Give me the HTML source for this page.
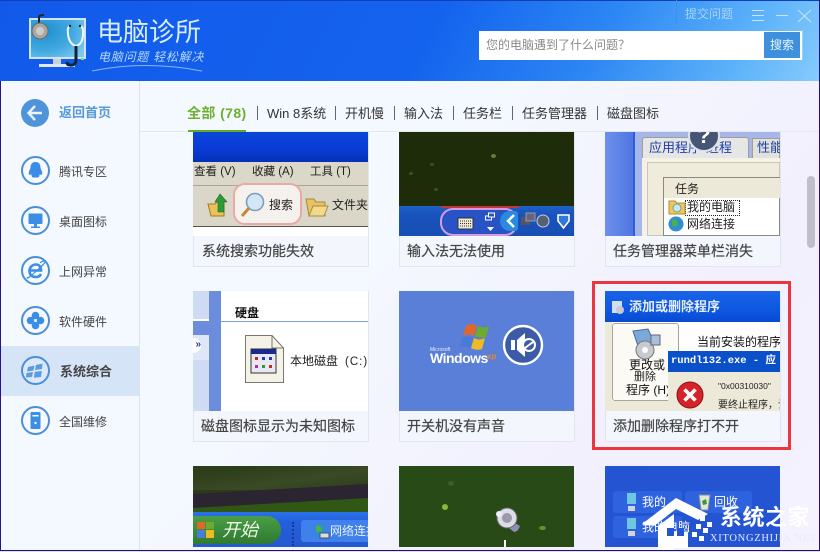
<!DOCTYPE html>
<html lang="zh">
<head>
<meta charset="utf-8">
<title>电脑诊所</title>
<style>
*{box-sizing:border-box;margin:0;padding:0}
html,body{width:820px;height:552px;overflow:hidden;background:#f4f3fd}
body{position:relative;font-family:"Liberation Sans","Noto Sans CJK SC",sans-serif;color:#444}
.a{position:absolute;white-space:nowrap}
.t{position:absolute;white-space:nowrap;line-height:1}
#head{position:absolute;left:0;top:0;width:820px;height:81px;background:linear-gradient(118deg,#1259ea 0,#1463ee 52%,#2c86f3 72%,#5fb4fa 90%,#86cbfc 100%)}
.nav{position:absolute;top:106px;font-size:13px;line-height:15px;color:#333;white-space:nowrap}
.sep{position:absolute;top:106px;width:1px;height:14px;background:#666}
.side{position:absolute;left:59px;font-size:12px;line-height:14px;color:#444;white-space:nowrap}
.ring{position:absolute;left:21px;width:29px;height:29px;border:2px solid #4a8fdb;border-radius:50%;background:#f7f9fe}
.card{position:absolute;width:176px;background:#f3f7fd;border:1px solid #dfe6f1;border-top:0;overflow:hidden}
.cap{position:absolute;font-size:14px;line-height:18px;color:#444;white-space:nowrap;-webkit-text-stroke:.2px #444}
.th{position:absolute;overflow:hidden}
</style>
</head>
<body>
<div class="a" style="left:0;top:0;width:820px;height:552px;background:linear-gradient(130deg,#f5f9ff 0,#f4f8ff 45%,#f2f0fd 75%,#f5f2fe 100%)"></div>

<div id="head"></div>
<div class="a" style="left:0;top:0;width:820px;height:1px;background:#1240b4"></div>

<svg class="a" style="left:26px;top:14px" width="66" height="56" viewBox="0 0 66 56">
  <defs><radialGradient id="sc" cx=".25" cy=".3" r=".9"><stop offset="0" stop-color="#1d8fd0"/><stop offset=".6" stop-color="#42a9e0"/><stop offset="1" stop-color="#7cc8ee"/></radialGradient></defs>
  <rect x="3" y="4" width="57" height="41" fill="#cfe5f3"/>
  <rect x="5" y="6" width="53" height="37" fill="url(#sc)"/>
  <rect x="27" y="45" width="8" height="5" fill="#c9d2d8"/>
  <rect x="13" y="50" width="36" height="3" fill="#dfe8ee"/>
  <path d="M13 9V3Q13 1 18 1" fill="none" stroke="#222" stroke-width="2"/>
  <circle cx="14" cy="17" r="8" fill="#a9a7a2" stroke="#6a6a68"/>
  <circle cx="14" cy="17" r="4" fill="#d0cdc6"/>
  <path d="M44 12Q41 13 42 20Q43 30 50 32Q57 30 57 20Q58 13 54 12" fill="none" stroke="#f2f7fb" stroke-width="2"/>
  <path d="M50 32V45Q50 52 44 51Q41 51 41 48" fill="none" stroke="#10233c" stroke-width="3"/>
  <circle cx="44" cy="12" r="1.2" fill="#10233c"/><circle cx="54" cy="12" r="1.2" fill="#10233c"/>
  <rect x="55" y="44" width="3" height="2" fill="#7fd66a"/>
</svg>
<div class="t" style="left:97px;top:19px;font-size:26px;color:#d6eefe">电脑诊所</div>
<div class="t" style="left:98px;top:51px;font-size:12px;letter-spacing:.75px;color:#b5d9f8;font-style:italic">电脑问题 轻松解决</div>
<svg class="a" style="left:90px;top:62px" width="115" height="12"><path d="M2 9Q55 -2 112 9" fill="none" stroke="#8ab8f4" stroke-width="1"/></svg>

<div class="t" style="left:685px;top:8px;font-size:12px;color:#a8d5f8">提交问题</div>
<div class="a" style="left:676px;top:0;width:1px;height:24px;background:#3f8fee"></div>
<svg class="a" style="left:750px;top:8px" width="66" height="16" fill="none" stroke="#c6e4fb" stroke-width="1">
  <path d="M2 2.5H14M2 7.5H14M2 12.5H14"/>
  <path d="M26 7.5H38"/>
  <path d="M48 2L61 14M61 2L48 14"/>
</svg>
<div class="a" style="left:479px;top:31px;width:323px;height:29px;background:#fff"></div>
<div class="a" style="left:802px;top:30px;width:1px;height:30px;background:#9fcdf4"></div>
<div class="t" style="left:486px;top:39px;font-size:12px;color:#8a8a8a">您的电脑遇到了什么问题？</div>
<div class="a" style="left:764px;top:32px;width:36px;height:26px;background:#3f90dc;color:#e6f3fd;font-size:12px;line-height:26px;text-align:center">搜索</div>

<!-- sidebar -->
<div class="a" style="left:139px;top:81px;width:1px;height:469px;background:#dde3ee"></div>
<div class="a" style="left:1px;top:346px;width:138px;height:50px;background:#d6e4f8"></div>
<div class="a" style="left:21px;top:99px;width:28px;height:28px;border-radius:50%;background:#4f93da"></div>
<svg class="a" style="left:21px;top:99px" width="28" height="28" fill="none" stroke="#eaf3fc" stroke-width="2.4"><path d="M21 14H8M14 7L7.5 14L14 21"/></svg>
<div class="side" style="top:106px;font-size:13px;font-weight:bold;color:#5a9ad8">返回首页</div>

<div class="ring" style="top:156px"></div>
<svg class="a" style="left:21px;top:156px" width="29" height="29"><path d="M14.5 6C10.5 6 9.5 9 9.5 12C8 15 7 18 8.5 19C9.5 19 10 18 10 18C11 20 10.5 21 12 21.5H17C18.5 21 18 20 19 18C19 18 19.5 19 20.5 19C22 18 21 15 19.5 12C19.5 9 18.5 6 14.5 6Z" fill="#3a8ee6"/></svg>
<div class="side" style="top:165px">腾讯专区</div>

<div class="ring" style="top:206px"></div>
<svg class="a" style="left:21px;top:206px" width="29" height="29" fill="#3a8ee6"><rect x="7.5" y="7.5" width="14" height="10.5" rx="1"/><rect x="13" y="18" width="3" height="3"/><rect x="10" y="20.5" width="9" height="1.5"/></svg>
<div class="side" style="top:215px">桌面图标</div>

<div class="ring" style="top:256px"></div>
<svg class="a" style="left:21px;top:256px" width="29" height="29" fill="none" stroke="#3a8ee6"><path d="M9 14.5H20C20 10.5 18 8.5 15 8.5C11 8.5 8.5 11.5 8.5 15C8.5 19 11 21 15 21C17.5 21 19 20 20 18" stroke-width="2.6"/><path d="M7 21C4 24 9 21 12 18C16 14 23 9 24 6C25 4 21 5 19 7" stroke-width="1.2"/></svg>
<div class="side" style="top:265px">上网异常</div>

<div class="ring" style="top:306px"></div>
<svg class="a" style="left:21px;top:306px" width="29" height="29" fill="#3a8ee6"><circle cx="14.5" cy="9.5" r="3.8"/><circle cx="14.5" cy="19.5" r="3.8"/><circle cx="9.5" cy="14.5" r="3.8"/><circle cx="19.5" cy="14.5" r="3.8"/><circle cx="14.5" cy="14.5" r="1" fill="#fff"/></svg>
<div class="side" style="top:315px">软件硬件</div>

<div class="ring" style="top:356px;background:#dde9f9"></div>
<svg class="a" style="left:21px;top:356px" width="29" height="29" fill="#5a9be2"><path d="M7 11L13.5 9.5L12.5 14.5L6 15.5Z"/><path d="M15 9L21.5 7.5L21 13L14 14Z"/><path d="M5.5 17L12 16L11 21L5 21.5Z"/><path d="M13.7 15.8L20.8 15L20 21L13 21.8Z"/></svg>
<div class="side" style="left:60px;top:364px;font-size:13px;font-weight:bold;line-height:15px;color:#444">系统综合</div>

<div class="ring" style="top:406px"></div>
<svg class="a" style="left:21px;top:406px" width="29" height="29"><rect x="9.5" y="6" width="10" height="17" rx="1" fill="#3a8ee6"/><rect x="11.5" y="9" width="6" height="1.5" fill="#fff"/><circle cx="14.5" cy="17" r="1.2" fill="#fff"/></svg>
<div class="side" style="top:415px">全国维修</div>

<!-- tabs -->
<div class="a" style="left:140px;top:131px;width:680px;height:1px;background:#e3e8f0"></div>
<div class="nav" style="left:187px;font-weight:bold;color:#6db02f;font-size:14px;letter-spacing:.4px">全部 (78)</div>
<div class="a" style="left:188px;top:130px;width:58px;height:2px;background:#62ad24"></div>
<div class="sep" style="left:257px"></div>
<div class="nav" style="left:267px">Win 8系统</div>
<div class="sep" style="left:335px"></div>
<div class="nav" style="left:345px">开机慢</div>
<div class="sep" style="left:394px"></div>
<div class="nav" style="left:404px">输入法</div>
<div class="sep" style="left:512px"></div>
<div class="sep" style="left:453px"></div>
<div class="nav" style="left:463px">任务栏</div>
<div class="nav" style="left:522px">任务管理器</div>
<div class="sep" style="left:597px"></div>
<div class="nav" style="left:607px">磁盘图标</div>

<!-- Card 1 -->
<div class="card" style="left:193px;top:132px;height:135px"></div>
<div class="th" style="left:193px;top:132px;width:175px;height:104px;background:#fff">
  <div class="a" style="left:0;top:0;width:175px;height:30px;background:linear-gradient(#0a46d8,#0a3cd8 50%,#0530b8)"></div>
  <div class="a" style="left:0;top:30px;width:175px;height:23px;background:#dbd8c9"></div>
  <div class="a" style="left:0;top:53px;width:175px;height:1px;background:#a8a698"></div>
  <div class="a" style="left:0;top:54px;width:175px;height:40px;background:#dad7c9"></div>
  <div class="a" style="left:0;top:94px;width:175px;height:1px;background:#55544c"></div>
  <div class="t" style="left:1px;top:35px;font-size:11.5px;color:#222">查看 (V)</div>
  <div class="t" style="left:59px;top:35px;font-size:11.5px;color:#222">收藏 (A)</div>
  <div class="t" style="left:117px;top:35px;font-size:11.5px;color:#222">工具 (T)</div>
  <svg class="a" style="left:14px;top:61px" width="24" height="24"><path d="M1 11H8L10 9H17V23H4Z" fill="#e9c25a" stroke="#a27a20"/><path d="M13 1L20 9H17V19H11V9H8Z" fill="#2d9a35" stroke="#1a6a20" stroke-width=".6"/></svg>
  <div class="a" style="left:40px;top:51px;width:69px;height:42px;border:2px solid #eaa9a9;border-radius:12px;background:#f5f1ec"></div>
  <svg class="a" style="left:47px;top:60px" width="26" height="28"><circle cx="15" cy="10" r="8.5" fill="#d2e6f6" stroke="#7d9ec0" stroke-width="1.6"/><path d="M9 16L2 24" stroke="#c88838" stroke-width="3"/></svg>
  <div class="t" style="left:76px;top:67px;font-size:12px;color:#222">搜索</div>
  <svg class="a" style="left:112px;top:63px" width="24" height="24"><path d="M1 4H9L11 7H20V21H4Z" fill="#e7c264" stroke="#a98a3a"/><path d="M4 21L8 11H23L19 21Z" fill="#f2d98c" stroke="#a98a3a"/></svg>
  <div class="t" style="left:139px;top:67px;font-size:12px;color:#222">文件夹</div>
</div>
<div class="cap" style="left:202px;top:242px">系统搜索功能失效</div>

<!-- Card 2 -->
<div class="card" style="left:399px;top:132px;height:135px"></div>
<div class="th" style="left:399px;top:132px;width:175px;height:104px;background:#1e2c0a">
  <div class="a" style="left:92px;top:22px;width:5px;height:4px;border-radius:50%;background:#6f7a32"></div>
  <div class="a" style="left:31px;top:31px;width:4px;height:3px;border-radius:50%;background:#3d5220"></div>
  <div class="a" style="left:10px;top:40px;width:4px;height:3px;border-radius:50%;background:#3d5220"></div>
  <div class="a" style="left:35px;top:56px;width:4px;height:3px;border-radius:50%;background:#3d5220"></div>
  <div class="a" style="left:0;top:74px;width:175px;height:30px;background:linear-gradient(#1f5fc8,#1a52bd 30%,#174fb4)"></div>
  <div class="a" style="left:42px;top:74px;width:78px;height:2px;background:#c03a3a"></div>
  <div class="a" style="left:41px;top:76px;width:78px;height:28px;border:2px solid #d79ae0;border-radius:13px;background:#2753c4"></div>
  <svg class="a" style="left:58px;top:81px" width="18" height="18"><rect x="1" y="5" width="15" height="11" fill="#ece9d8" stroke="#333"/><path d="M3 8H14M3 10.5H14M3 13H14" stroke="#333" stroke-dasharray="1 1"/></svg>
  <svg class="a" style="left:85px;top:79px" width="14" height="22" fill="none" stroke="#fff"><rect x="1.5" y="5" width="6" height="4"/><rect x="4.5" y="2" width="6" height="4" fill="#2753c4"/><path d="M3 16H10L6.5 20Z" fill="#fff" stroke="none"/></svg>
  <div class="a" style="left:101px;top:79px;width:18px;height:20px;background:#2a89e0;border-radius:10px 3px 3px 10px"></div>
  <svg class="a" style="left:106px;top:81px" width="14" height="16" fill="none" stroke="#fff" stroke-width="2.5"><path d="M9 2L3 8L9 14"/></svg>
  <svg class="a" style="left:121px;top:80px" width="50" height="20"><rect x="1" y="5" width="9" height="8" fill="#556" /><rect x="6" y="1" width="9" height="8" fill="#667" stroke="#99a"/><circle cx="23" cy="9" r="6" fill="#556070" stroke="#ccd"/><path d="M38 3H49V9L43.5 16L38 9Z" fill="#2f78d8" stroke="#fff" stroke-width="1.6"/></svg>
</div>
<div class="cap" style="left:407px;top:242px">输入法无法使用</div>

<!-- Card 3 -->
<div class="card" style="left:605px;top:132px;height:135px"></div>
<div class="th" style="left:605px;top:132px;width:175px;height:104px;background:#8ba0e6">
  <div class="a" style="left:0;top:0;width:28px;height:104px;background:linear-gradient(90deg,#6f90ea,#4f76e2)"></div>
  <div class="a" style="left:28px;top:0;width:2px;height:104px;background:#2a5fe0"></div>
  <div class="a" style="left:30px;top:0;width:145px;height:104px;background:#a6b5ea"></div>
  <div class="a" style="left:37px;top:5px;width:107px;height:25px;background:#e6e6e4;border:1px solid #9f9f94;border-bottom:0;border-radius:3px 3px 0 0"></div>
  <div class="a" style="left:147px;top:6px;width:28px;height:24px;background:#e2e1dc;border:1px solid #9f9f94;border-bottom:0"></div>
  <div class="t" style="left:44px;top:9px;font-size:13px;color:#1c3fa8">应用程序</div>
  <div class="t" style="left:101px;top:9px;font-size:13px;color:#1c3fa8">进程</div>
  <div class="t" style="left:152px;top:9px;font-size:13px;color:#1c3fa8">性能</div>
  <div class="a" style="left:37px;top:26px;width:138px;height:78px;background:#f4f2e6"></div>
  <div class="a" style="left:42px;top:30px;width:133px;height:74px;background:#efecdc;border:1px solid #c9c6b6"></div>
  <div class="a" style="left:58px;top:45px;width:117px;height:59px;background:#fff;border:1px solid #8a8a80"></div>
  <div class="a" style="left:59px;top:46px;width:116px;height:20px;background:#ecE9d8"></div>
  <div class="t" style="left:70px;top:51px;font-size:12px;color:#222">任务</div>
  <div class="a" style="left:80px;top:68px;width:55px;height:16px;border:1px dotted #222"></div>
  <svg class="a" style="left:63px;top:67px" width="18" height="36"><path d="M1 2H7L9 4H17V15H1Z" fill="#efc660" stroke="#b58a2c"/><circle cx="9" cy="9" r="4" fill="#cfe4f5" stroke="#6a8"/><circle cx="8" cy="25" r="7.5" fill="#2f8ed0"/><path d="M4 21Q9 19 10 25Q7 30 4 26Z" fill="#4fb04a"/></svg>
  <div class="t" style="left:82px;top:69px;font-size:12px;color:#222">我的电脑</div>
  <div class="t" style="left:82px;top:86px;font-size:12px;color:#222">网络连接</div>
  <div class="a" style="left:83px;top:-12px;width:32px;height:32px;border-radius:50%;background:#465573;border:2px solid #dde2ee;color:#fff;font:bold 22px/28px 'Liberation Sans',sans-serif;text-align:center">?</div>
</div>
<div class="cap" style="left:613px;top:242px">任务管理器菜单栏消失</div>

<!-- Card 4 -->
<div class="card" style="left:193px;top:291px;height:151px"></div>
<div class="th" style="left:193px;top:291px;width:175px;height:120px;background:#fff">
  <div class="a" style="left:0;top:0;width:16px;height:120px;background:#cfdaf5"></div>
  <div class="a" style="left:0;top:28px;width:16px;height:2px;background:#fff"></div>
  <div class="a" style="left:0;top:30px;width:16px;height:14px;background:#6c8cdc"></div>
  <div class="a" style="left:0;top:44px;width:16px;height:25px;background:#dfe6f8"></div>
  <div class="a" style="left:-7px;top:47px;width:15px;height:15px;border-radius:50%;background:#fff;color:#1c3f9c;font:bold 10px/13px 'Liberation Sans',sans-serif;text-align:right">»</div>
  <div class="a" style="left:16px;top:0;width:12px;height:120px;background:#6c8cdc"></div>
  <div class="t" style="left:42px;top:16px;font-size:12px;font-weight:bold;color:#111">硬盘</div>
  <div class="a" style="left:28px;top:30px;width:147px;height:1px;background:#7fa6dc"></div>
  <svg class="a" style="left:51px;top:43px" width="42" height="50"><path d="M1.5 1.5H28L39.5 14V48.5H1.5Z" fill="#f5f3e8" stroke="#77776c"/><path d="M28 1.5V14H39.5" fill="none" stroke="#77776c"/><rect x="7" y="15" width="25" height="24" fill="#e8e8f2" stroke="#333"/><rect x="7" y="15" width="25" height="5" fill="#1c2a8c"/><g fill="#c02a2a"><rect x="11" y="23" width="3" height="3"/><rect x="25" y="23" width="3" height="3" fill="#2a3ac0"/><rect x="18" y="23" width="3" height="3" fill="#2a3ac0"/><rect x="11" y="31" width="3" height="3" fill="#b02ab0"/><rect x="18" y="31" width="3" height="3" fill="#2a9a2a"/><rect x="25" y="31" width="3" height="3"/></g></svg>
  <div class="t" style="left:97px;top:64px;font-size:12px;color:#222">本地磁盘<span style="margin-left:7px;letter-spacing:1px;font-size:11.5px">(C:)</span></div>
</div>
<div class="cap" style="left:201px;top:417px">磁盘图标显示为未知图标</div>

<!-- Card 5 -->
<div class="card" style="left:399px;top:291px;height:151px"></div>
<div class="th" style="left:399px;top:291px;width:175px;height:120px;background:#5a7fd9">
  <svg class="a" style="left:58px;top:30px" width="34" height="30"><path d="M9 5Q14 1 20 5L17 15Q12 12 6 15Z" fill="#e0662a"/><path d="M21 5Q26 8 32 5L29 16Q24 18 18 15Z" fill="#6eaa2e"/><path d="M5 17Q10 14 16 17L13 27Q8 24 2 27Z" fill="#4a7ad8"/><path d="M17 17Q22 20 28 17L25 28Q20 30 14 27Z" fill="#eebb22"/></svg>
  <div class="t" style="left:31px;top:57px;font-size:5px;color:#e8eefa">Microsoft</div>
  <div class="t" style="left:31px;top:60px;font-size:14px;font-weight:bold;letter-spacing:-.5px;color:#fff">Windows</div>
  <div class="t" style="left:88px;top:62px;font-size:8px;font-weight:bold;color:#e8853a">xp</div>
  <svg class="a" style="left:103px;top:33px" width="42" height="42"><circle cx="21" cy="21" r="19" fill="#3b5aa8" stroke="#fff" stroke-width="2.4"/><path d="M9 16H13V26H9Z" fill="#fff"/><path d="M15 16L23 9V33L15 26Z" fill="#fff"/><circle cx="27" cy="21" r="6" fill="#3b5aa8" stroke="#fff" stroke-width="2"/><path d="M23 24L31 18" stroke="#fff" stroke-width="2"/></svg>
</div>
<div class="cap" style="left:407px;top:417px">开关机没有声音</div>

<!-- Card 6 -->
<div class="card" style="left:605px;top:291px;height:151px"></div>
<div class="th" style="left:605px;top:291px;width:175px;height:120px;background:#fff">
  <div class="a" style="left:0;top:0;width:175px;height:31px;background:linear-gradient(#1a64e8,#0b55e0 70%,#0a4ad0)"></div>
  <div class="t" style="left:24px;top:9px;font-size:13px;font-weight:bold;color:#e4edfa">添加或删除程序</div>
  <svg class="a" style="left:5px;top:8px" width="16" height="16"><rect x="2" y="2" width="10" height="12" fill="#cfe0f4"/><circle cx="10" cy="11" r="4" fill="#c8c8d0"/></svg>
  <div class="a" style="left:0;top:31px;width:7px;height:89px;background:#ece9d8"></div>
  <div class="a" style="left:7px;top:32px;width:67px;height:78px;background:#fbfaf4;border:1px solid #a8a69a;border-radius:3px"></div>
  <div class="a" style="left:0;top:110px;width:63px;height:10px;background:#ece9d8"></div>
  <svg class="a" style="left:23px;top:37px" width="36" height="32"><path d="M5 3L20 1L26 14L10 18Z" fill="#7aa8d8" stroke="#4a6a94"/><circle cx="17" cy="22" r="9" fill="#c8cad2" stroke="#777"/><circle cx="17" cy="22" r="3" fill="#fff"/><rect x="23" y="7" width="9" height="10" fill="#a8c0dc" stroke="#667"/></svg>
  <div class="t" style="left:24px;top:67px;font-size:12px;color:#111;line-height:14px;text-align:center;width:36px;white-space:normal">更改或</div>
  <div class="t" style="left:29px;top:81px;font-size:11px;color:#222">删除</div>
  <div class="t" style="left:21px;top:93px;font-size:12px;color:#111">程序 (H)</div>
  <div class="t" style="left:92px;top:45px;font-size:12px;color:#111">当前安装的程序</div>
  <div class="a" style="left:63px;top:60px;width:112px;height:60px;background:#ece9d8"></div>
  <div class="a" style="left:63px;top:60px;width:112px;height:21px;background:#0a50c8;overflow:hidden"><span class="t" style="left:3px;top:5px;font:bold 10.5px/1 'Liberation Mono','Noto Sans CJK SC',monospace;color:#fff">rundl132.exe - 应</span></div>
  <svg class="a" style="left:71px;top:90px" width="28" height="28"><circle cx="14" cy="14" r="13" fill="#d8222a" stroke="#8a1018"/><path d="M8.5 8.5L19.5 19.5M19.5 8.5L8.5 19.5" stroke="#fff" stroke-width="3.6"/></svg>
  <div class="t" style="left:113px;top:91px;font-size:8.5px;color:#222">"0x00310030"</div>
  <div class="t" style="left:113px;top:110px;font-size:10px;color:#222">要终止程序，让</div>
</div>
<div class="cap" style="left:613px;top:417px">添加删除程序打不开</div>
<div class="a" style="left:592px;top:281px;width:199px;height:169px;border:3px solid #e8373f"></div>

<!-- Card 7 -->
<div class="th" style="left:193px;top:466px;width:175px;height:81px;background:#2c3a1a">
  <div class="a" style="left:0;top:0;width:175px;height:24px;background:linear-gradient(172deg,#2d3f1a 20%,#3a4a24 60%,#2c3a1c)"></div>
  <svg class="a" style="left:0;top:14px" width="175" height="34"><path d="M0 14L175 4V18L0 28Z" fill="#2a2530"/><path d="M0 28L175 18V34H0Z" fill="#305714"/></svg>
  <div class="a" style="left:0;top:46px;width:175px;height:35px;background:linear-gradient(#2a72e8,#245fdc 30%,#2458cf)"></div>
  <div class="a" style="left:-10px;top:50px;width:98px;height:28px;border-radius:0 14px 14px 0;background:linear-gradient(#4b9e46,#38893a 60%,#2f7a30)"></div>
  <svg class="a" style="left:2px;top:54px" width="22" height="20"><path d="M2 2H10V9H2Z" fill="#e0662a"/><path d="M11 2H19V9H11Z" fill="#6eaa2e"/><path d="M2 10H10V18H2Z" fill="#4a7ad8"/><path d="M11 10H19V18H11Z" fill="#eebb22"/></svg>
  <div class="t" style="left:29px;top:55px;font-size:18px;font-style:italic;color:#f2f6e8">开始</div>
  <div class="a" style="left:99px;top:56px;width:2px;height:24px;border-left:2px dotted #123a9c"></div>
  <div class="a" style="left:108px;top:54px;width:67px;height:22px;background:#3f80ea;border-radius:3px 0 0 3px"></div>
  <svg class="a" style="left:119px;top:56px" width="18" height="18"><circle cx="8" cy="8" r="6.5" fill="#2f8ed0"/><path d="M4 4Q9 2 10 8Q7 12 4 9Z" fill="#4fb04a"/><rect x="8" y="11" width="9" height="5" fill="#d8dee8" stroke="#456"/></svg>
  <div class="t" style="left:137px;top:59px;font-size:12px;color:#e8f0fc">网络连接</div>
</div>

<!-- Card 8 -->
<div class="th" style="left:399px;top:466px;width:175px;height:81px;background:#284a16">
  <div class="a" style="left:43px;top:38px;width:6px;height:6px;border-radius:50%;background:#8fb43a"></div>
  <div class="a" style="left:140px;top:60px;width:7px;height:4px;border-radius:50%;background:#6e8a34"></div>
  <div class="a" style="left:49px;top:15px;width:6px;height:5px;border-radius:50%;background:#3d6028"></div>
  <svg class="a" style="left:93px;top:38px" width="32" height="32"><path d="M18 16L28 22Q26 28 22 28L12 20Z" fill="#8a90b8"/><circle cx="15" cy="14" r="10" fill="#dcdde6" stroke="#666"/><circle cx="15" cy="14" r="5" fill="#9a9aa8"/><circle cx="7" cy="10" r="3" fill="#eef"/></svg>
  <div class="a" style="left:105px;top:74px;width:2px;height:7px;background:#fff"></div>
</div>

<!-- Card 9 -->
<div class="th" style="left:605px;top:466px;width:175px;height:81px;background:#2454d2">
  <div class="a" style="left:8px;top:25px;width:69px;height:22px;background:#2e62de;border-radius:3px"></div>
  <div class="a" style="left:80px;top:25px;width:67px;height:22px;background:#2e62de;border-radius:3px"></div>
  <div class="a" style="left:8px;top:50px;width:69px;height:22px;background:#2e62de;border-radius:3px"></div>
  <svg class="a" style="left:20px;top:26px" width="14" height="20"><rect x="2" y="1" width="9" height="11" fill="#6ec6e0"/><rect x="3" y="14" width="7" height="5" fill="#d0d4dc"/></svg>
  <svg class="a" style="left:20px;top:51px" width="14" height="20"><rect x="2" y="1" width="9" height="11" fill="#6ec6e0"/><rect x="3" y="14" width="7" height="5" fill="#d0d4dc"/></svg>
  <svg class="a" style="left:92px;top:26px" width="16" height="20"><path d="M2 3H13L11 18H4Z" fill="#dfe8d8" stroke="#889"/><path d="M5 9L9 7L10 12L6 13Z" fill="#3a9a2a"/></svg>
  <div class="t" style="left:37px;top:30px;font-size:12px;color:#fff">我的</div>
  <div class="t" style="left:109px;top:30px;font-size:12px;color:#fff">回收</div>
  <div class="t" style="left:37px;top:55px;font-size:12px;color:#fff">我的电脑</div>
</div>
<!-- watermark -->
<svg class="a" style="left:640px;top:496px" width="92" height="56" fill="#fff"><path d="M2 28L36 2L68 18L58 24L36 13L14 30Z"/><path d="M18 30L34 18V54H18Z"/><rect x="20" y="36" width="28" height="16"/><rect x="27" y="32" width="7" height="8" fill="#2454d2"/><rect x="37" y="32" width="7" height="8" fill="#2454d2"/><rect x="60" y="20" width="5" height="5"/><rect x="67" y="26" width="5" height="5"/><rect x="56" y="28" width="5" height="5"/><rect x="63" y="32" width="5" height="5"/><rect x="52" y="36" width="5" height="5"/><rect x="59" y="40" width="5" height="5"/></svg>
<div class="t" style="left:720px;top:507px;font-size:22px;font-weight:bold;color:#fff;letter-spacing:.5px">系统之家</div>
<div class="t" style="left:710px;top:534px;font:10.5px/1 'Liberation Serif',serif;letter-spacing:.7px;color:#e4ebfb">XITONGZHIJIA.NET</div>

<!-- scrollbar -->
<div class="a" style="left:807px;top:176px;width:8px;height:72px;border-radius:4px;background:#bfbfc9"></div>

<!-- window border -->
<div class="a" style="left:0;top:81px;width:1px;height:470px;background:#2a1090"></div>
<div class="a" style="left:819px;top:0;width:1px;height:551px;background:#2a1090"></div>
<div class="a" style="left:0;top:550px;width:820px;height:1px;background:#1f0e80"></div>
<div class="a" style="left:0;top:551px;width:820px;height:1px;background:#dfe0ea"></div>
</body>
</html>
